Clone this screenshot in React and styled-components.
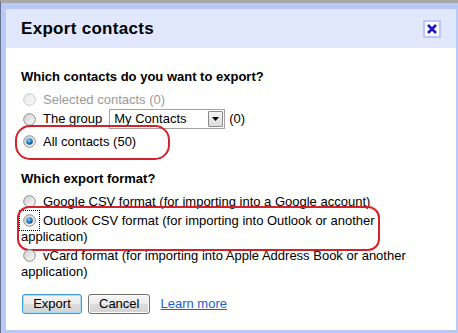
import React from 'react';
import styled, { createGlobalStyle } from 'styled-components';

const GlobalStyle = createGlobalStyle`
  html, body {
    margin: 0;
    padding: 0;
    overflow: hidden;
    background: #ffffff;
  }
  body {
    font-family: "Liberation Sans", Arial, sans-serif;
  }
`;

function Radio({ checked, disabled, focused }) {
  const ring = disabled ? '#c9c9c9' : '#8c8c8c';
  return (
    <RadioMark $focused={focused}>
      <svg width="13" height="13" viewBox="0 0 13 13">
        <defs>
          <linearGradient id="bodyGrad" x1="0" y1="0" x2="1" y2="1">
            <stop offset="0" stopColor="#cfcfcf" />
            <stop offset="1" stopColor="#fbfbfb" />
          </linearGradient>
          <linearGradient id="offGrad" x1="0" y1="0" x2="1" y2="1">
            <stop offset="0" stopColor="#e8e8e8" />
            <stop offset="1" stopColor="#fafafa" />
          </linearGradient>
          <radialGradient id="dotGrad" cx="0.4" cy="0.35" r="0.7">
            <stop offset="0" stopColor="#8fd3ff" />
            <stop offset="0.5" stopColor="#2f86cf" />
            <stop offset="1" stopColor="#0b3d78" />
          </radialGradient>
        </defs>
        <circle cx="6.5" cy="6.5" r="5.8" fill={disabled ? 'url(#offGrad)' : 'url(#bodyGrad)'} stroke={ring} strokeWidth="1" />
        {checked && <circle cx="6.5" cy="6.5" r="3.3" fill="url(#dotGrad)" />}
      </svg>
    </RadioMark>
  );
}

function App() {
  return (
    <>
      <GlobalStyle />
      <Window>
        <Dialog>
          <Header>
            <Title>Export contacts</Title>
            <CloseButton>
              <svg width="12" height="12" viewBox="0 0 12 12">
                <path d="M2 2 L10 10 M10 2 L2 10" stroke="#1b16c8" strokeWidth="2.6" />
              </svg>
            </CloseButton>
          </Header>
          <Body>
            <Question>Which contacts do you want to export?</Question>
            <Option $top={7} $muted>
              <Radio disabled />Selected contacts (0)
            </Option>
            <GroupRow>
              <Radio />
              <span>The group</span>
              <Select>
                <SelectText>My Contacts</SelectText>
                <SelectArrow>
                  <svg width="7" height="4" viewBox="0 0 7 4">
                    <path d="M0 0 H7 L3.5 4 Z" fill="#000" />
                  </svg>
                </SelectArrow>
              </Select>
              <Count>(0)</Count>
            </GroupRow>
            <Option $top={5}>
              <Radio checked />All contacts (50)
              <Highlight style={{ left: -6, top: -9, width: 155, height: 35 }} $radius={15} />
            </Option>

            <Question $top={21}>Which export format?</Question>
            <Option $top={7}>
              <Radio />Google CSV format (for importing into a Google account)
            </Option>
            <Option $top={3}>
              <Radio checked focused />Outlook CSV format (for importing into Outlook or another application)
              <Highlight style={{ left: -4, top: -7, width: 363, height: 45 }} $radius={12} />
            </Option>
            <Option $top={3}>
              <Radio />vCard format (for importing into Apple Address Book or another application)
            </Option>

            <Actions>
              <Button $primary>Export</Button>
              <Button>Cancel</Button>
              <LearnMore href="#">Learn more</LearnMore>
            </Actions>
          </Body>
        </Dialog>
      </Window>
    </>
  );
}

export default App;

const Window = styled.div`
  width: 458px;
  height: 333px;
  box-sizing: border-box;
  border-top: 3px solid #a7a7a7;
  border-left: 1px solid #66718f;
  background: #b8c9f7;
  padding: 6px 2px 3px 5px;
  display: flex;
`;

const Dialog = styled.div`
  flex: 1;
  display: flex;
  flex-direction: column;
  background: #ffffff;
`;

const Header = styled.div`
  height: 39px;
  flex-shrink: 0;
  display: flex;
  align-items: center;
  justify-content: space-between;
  padding: 0 15px;
  background: #e1e8fd;
`;

const Title = styled.h1`
  margin: 0;
  font-size: 17px;
  letter-spacing: 0.3px;
  font-weight: bold;
  color: #000000;
`;

const CloseButton = styled.div`
  width: 18px;
  height: 18px;
  box-sizing: border-box;
  border: 2px solid #b8c9f7;
  background: #ffffff;
  display: flex;
  align-items: center;
  justify-content: center;
`;

const Body = styled.div`
  display: flex;
  flex-direction: column;
  padding: 21px 15px 0 15px;
  font-size: 13px;
  line-height: 16px;
  color: #000000;
`;

const Question = styled.div`
  margin-top: ${p => p.$top || 0}px;
  font-weight: bold;
  font-size: 13px;
  line-height: 16px;
`;

const Option = styled.div`
  position: relative;
  margin-top: ${p => p.$top || 0}px;
  color: ${p => (p.$muted ? '#9a9a9a' : '#000000')};
`;

const RadioMark = styled.span`
  display: inline-block;
  width: 13px;
  height: 13px;
  margin: 0 7px 0 2px;
  vertical-align: -2px;
  outline: ${p => (p.$focused ? '1px dotted #000' : 'none')};
  outline-offset: 3px;

  svg {
    display: block;
  }
`;

const GroupRow = styled.div`
  margin-top: 1px;
  height: 20px;
  display: flex;
  align-items: center;
`;

const Select = styled.div`
  margin-left: 7px;
  width: 116px;
  height: 20px;
  box-sizing: border-box;
  border: 1px solid #a3a3a3;
  display: flex;
  align-items: center;
  justify-content: space-between;
  padding: 0 1px 0 4px;
  background: #ffffff;
`;

const SelectText = styled.span`
  font-size: 13px;
`;

const SelectArrow = styled.span`
  width: 15px;
  height: 16px;
  box-sizing: border-box;
  border: 1px solid #8b8b8b;
  border-radius: 1px;
  background: linear-gradient(#f4f4f4, #dcdcdc);
  display: flex;
  align-items: center;
  justify-content: center;
`;

const Count = styled.span`
  margin-left: 4px;
`;

const Highlight = styled.span`
  position: absolute;
  box-sizing: border-box;
  border: 2px solid #d3222c;
  border-radius: ${p => p.$radius}px;
  pointer-events: none;
`;

const Actions = styled.div`
  margin-top: 14px;
  display: flex;
  align-items: center;
  padding-left: 1px;
`;

const Button = styled.button`
  height: 20px;
  min-width: 60px;
  padding: 0 10px;
  margin-right: 6px;
  box-sizing: border-box;
  border: 1px solid ${p => (p.$primary ? '#3d9bd6' : '#707070')};
  border-radius: 3px;
  background: linear-gradient(#f5f5f5 0%, #ececec 50%, #dcdcdc 51%, #d3d3d3 100%);
  box-shadow: inset 0 0 0 1px ${p => (p.$primary ? '#a9dcf7' : '#fbfbfb')};
  font-family: "Liberation Sans", Arial, sans-serif;
  font-size: 13px;
  color: #000000;
  line-height: 16px;
`;

const LearnMore = styled.a`
  margin-left: 4px;
  color: #1f5fcf;
  text-decoration: underline;
  font-size: 13px;
`;
